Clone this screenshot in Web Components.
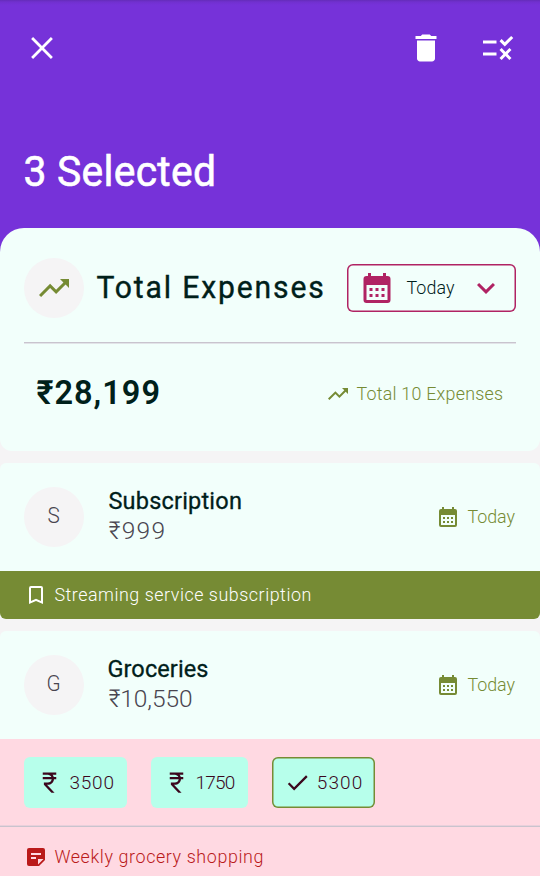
<!DOCTYPE html>
<html lang="en">
<head>
<meta charset="utf-8">
<title>Expenses</title>
<style>
html, body { margin: 0; height: 876px; overflow: hidden; }
body { font-family: Roboto, "Noto Sans", sans-serif; background: #f5f4f5; }
</style>
</head>
<body>
<expense-screen></expense-screen>
<script>
const ICONS = {
  close: '<path d="M5.4 5.4 18.6 18.6M18.6 5.4 5.4 18.6" fill="none" stroke="currentColor" stroke-width="1.85"/>',
  trash: '<path d="M6 19c0 1.1.9 2 2 2h8c1.1 0 2-.9 2-2V7H6v12zM19 4h-3.5l-1-1h-5l-1 1H5v2h14V4z"/>',
  rule: '<path d="M16.54 11L13 7.46l1.41-1.41 2.12 2.12 4.24-4.24 1.41 1.41L16.54 11zM11 7H2v2h9V7zm10 6.41L19.59 12 17 14.59 14.41 12 13 13.41 15.59 16 13 18.59 14.41 20 17 17.41 19.59 20 21 18.59 18.41 16 21 13.41zM11 15H2v2h9v-2z"/>',
  trend: '<path d="M16 6l2.29 2.29-4.88 4.88-4-4L2 16.59 3.41 18l6-6 4 4 6.3-6.29L22 12V6z"/>',
  calendar: '<path fill-rule="evenodd" d="M19 4h-1V2h-2v2H8V2H6v2H5a2 2 0 0 0-2 2v14a2 2 0 0 0 2 2h14a2 2 0 0 0 2-2V6a2 2 0 0 0-2-2zm0 16H5V10h14v10zM7 12h2v2H7zM11 12h2v2h-2zM15 12h2v2h-2zM7 16h2v2H7zM11 16h2v2h-2zM15 16h2v2h-2z"/>',
  chevron: '<path d="M7.41 8.59 12 13.17l4.59-4.58L18 10l-6 6-6-6z"/>',
  bookmark: '<path d="M17 3H7a2 2 0 0 0-2 2v16l7-3 7 3V5a2 2 0 0 0-2-2zm0 15-5-2.18L7 18V5h10v13z"/>',
  note: '<path fill-rule="evenodd" d="M19 3H5a2 2 0 0 0-2 2v14a2 2 0 0 0 2 2h10l6-6V5a2 2 0 0 0-2-2zM12 14H7v-2h5v2zm5-4H7V8h10v2zm-3 9.500V14h5.500L14 19.500z"/>',
  rupee: '<path d="M13.66 7c-.56-1.18-1.76-2-3.16-2H6V3h12v2h-3.26c.48.58.84 1.26 1.05 2H18v2h-2.02c-.25 2.8-2.61 5-5.48 5h-.73l6.73 7h-2.77L7 14v-2h3.5c1.76 0 3.22-1.3 3.46-3H6V7h7.66z"/>',
  check: '<path d="M9 16.17L4.83 12l-1.42 1.41L9 19 21 7l-1.41-1.41L9 16.17z"/>'
};

class AppIcon extends HTMLElement {
  connectedCallback() {
    const size = this.getAttribute('size') || 24;
    this.attachShadow({ mode: 'open' }).innerHTML = `
      <style>:host{display:block;flex:none;width:${size}px;height:${size}px}svg{display:block}</style>
      <svg width="${size}" height="${size}" viewBox="0 0 24 24" fill="currentColor">${ICONS[this.getAttribute('name')]}</svg>`;
  }
}
customElements.define('app-icon', AppIcon);

// A narrow, tracked label: the tracking is chosen so that the ink fills `width`.
class TrackedText extends HTMLElement {
  connectedCallback() {
    const text = this.getAttribute('text');
    const size = +this.getAttribute('size');
    const width = +this.getAttribute('width');
    const weight = this.getAttribute('weight') || 400;
    const squeeze = +(this.getAttribute('squeeze') || 0.94);
    const stroke = this.getAttribute('stroke') || 0;
    const ctx = document.createElement('canvas').getContext('2d');
    ctx.font = `${weight} ${size}px Roboto, "Noto Sans", sans-serif`;
    const m = ctx.measureText(text);
    const ink = m.actualBoundingBoxLeft + m.actualBoundingBoxRight;
    const tracking = text.length > 1 ? (width / squeeze - ink) / (text.length - 1) : 0;
    this.attachShadow({ mode: 'open' }).innerHTML = `
      <style>
        :host{display:block;flex:none;width:${width}px;height:${Math.round(size * 1.2)}px}
        span{display:inline-block;white-space:pre;font-size:${size}px;font-weight:${weight};
          line-height:${Math.round(size * 1.2)}px;letter-spacing:${tracking}px;
          -webkit-text-stroke:${stroke}px currentColor;
          transform-origin:0 50%;transform:translate(-.6px,-1px) scaleX(${squeeze});
          margin-left:${m.actualBoundingBoxLeft * squeeze}px}
      </style><span>${text}</span>`;
  }
}
customElements.define('tracked-text', TrackedText);

class RoundBadge extends HTMLElement {
  connectedCallback() {
    this.attachShadow({ mode: 'open' }).innerHTML = `
      <style>:host{display:flex;flex:none;width:60px;height:60px;border-radius:50%;background:#f5f4f5;align-items:center;justify-content:center}</style><slot></slot>`;
  }
}
customElements.define('round-badge', RoundBadge);

class SelectionBar extends HTMLElement {
  connectedCallback() {
    this.attachShadow({ mode: 'open' }).innerHTML = `
      <style>
        :host{display:block;height:252px;box-sizing:border-box;padding:30px 24px 0;color:#fff;
          background:linear-gradient(#642cb9,#7130cf 2px,#7632d9 5px)}
        .tools{display:flex;align-items:center;gap:36px;height:36px}
        .tools :first-child{margin-right:auto}
        tracked-text{margin:80px 0 0 2px}
      </style>
      <div class="tools"><app-icon name="close" size="36"></app-icon>
        <app-icon name="trash" size="36"></app-icon><app-icon name="rule" size="36"></app-icon></div>
      <tracked-text text="3 Selected" size="43" width="188.500" stroke=".6" squeeze=".95"></tracked-text>`;
  }
}
customElements.define('selection-bar', SelectionBar);

class PeriodPicker extends HTMLElement {
  connectedCallback() {
    this.attachShadow({ mode: 'open' }).innerHTML = `
      <style>
        :host{display:flex;flex:none;align-items:center;width:169.500px;height:48px;box-sizing:border-box;
          padding-left:12px;border-radius:6px;box-shadow:inset 0 0 0 1.5px #b02363;color:#b02363}
        tracked-text{color:#00201a;margin:0 13px 0 12.500px}
      </style>
      <app-icon name="calendar" size="36"></app-icon>
      <tracked-text text="Today" size="19" width="48" weight="300"></tracked-text>
      <app-icon name="chevron" size="36"></app-icon>`;
  }
}
customElements.define('period-picker', PeriodPicker);

class TotalCard extends HTMLElement {
  connectedCallback() {
    this.attachShadow({ mode: 'open' }).innerHTML = `
      <style>
        :host{display:block;position:relative;height:223px;margin-top:-24px;box-sizing:border-box;padding:30px 24px 0;
          border-radius:24px 24px 12px 12px;background:#f2fffb;color:#00201a}
        .head{display:flex;align-items:center;height:60px;padding-bottom:24px;
          border-bottom:1px solid #c9c4ce;box-shadow:0 1px #e2e4e8}
        .head tracked-text{margin-left:13px}
        period-picker{margin-left:auto}
        .sum{display:flex;align-items:center;height:102px;padding:0 13px}
        .count{display:flex;align-items:center;gap:7px;margin-left:auto;color:#768b34}
        app-icon[name=trend]{color:#768b34}
      </style>
      <div class="head"><round-badge><app-icon name="trend" size="36"></app-icon></round-badge>
        <tracked-text text="Total Expenses" size="32" width="226" stroke=".4"></tracked-text>
        <period-picker></period-picker></div>
      <div class="sum"><tracked-text text="₹28,199" size="33.500" width="122.500" weight="600" squeeze=".97"></tracked-text>
        <div class="count"><app-icon name="trend"></app-icon>
        <tracked-text text="Total 10 Expenses" size="19" width="146" weight="300"></tracked-text></div></div>`;
  }
}
customElements.define('total-card', TotalCard);

class ExpenseCard extends HTMLElement {
  connectedCallback() {
    const a = n => this.getAttribute(n);
    this.attachShadow({ mode: 'open' }).innerHTML = `
      <style>
        :host{display:block;margin-top:12px;border-radius:6px;overflow:hidden;background:#f2fffb}
        .row{display:flex;align-items:center;height:108px;box-sizing:border-box;padding:0 24px}
        round-badge{color:#49454f}
        .names{display:grid;gap:1px;margin:0 0 2px 25px}
        .name{color:#00201a}.amount{color:#49454f}
        .date{display:flex;align-items:center;gap:8px;margin-left:auto;color:#768b34}
        .date tracked-text{margin-right:.5px}
      </style>
      <div class="row">
        <round-badge><tracked-text text="${a('initial')}" size="22" width="12" weight="300"></tracked-text></round-badge>
        <div class="names">
          <tracked-text class="name" text="${a('name')}" size="24.500" width="${a('name-width')}" stroke=".3" squeeze=".96"></tracked-text>
          <tracked-text class="amount" text="${a('amount')}" size="24.500" width="${a('amount-width')}" weight="300" squeeze="1"></tracked-text>
        </div>
        <div class="date"><app-icon name="calendar"></app-icon><tracked-text text="Today" size="19" width="47.500" weight="300"></tracked-text></div>
      </div>
      <slot></slot>`;
  }
}
customElements.define('expense-card', ExpenseCard);

class NoteBar extends HTMLElement {
  connectedCallback() {
    this.attachShadow({ mode: 'open' }).innerHTML = `
      <style>:host{display:flex;align-items:center;gap:7px;height:48px;box-sizing:border-box;padding-left:24px;
        background:var(--bar);color:var(--ink)}
        :host([ruled]){height:61px}</style><slot></slot>`;
  }
}
customElements.define('note-bar', NoteBar);

class ChipRow extends HTMLElement {
  connectedCallback() {
    this.attachShadow({ mode: 'open' }).innerHTML = `
      <style>:host{display:flex;align-items:center;gap:24px;height:87px;padding:0 24px;background:#ffd9e2;
        border-bottom:1px solid #c9c4ce;box-shadow:inset 0 -1px #e9d0db}</style><slot></slot>`;
  }
}
customElements.define('chip-row', ChipRow);

class AmountChip extends HTMLElement {
  connectedCallback() {
    this.attachShadow({ mode: 'open' }).innerHTML = `
      <style>
        :host{display:flex;align-items:center;gap:7px;height:51px;box-sizing:border-box;padding:0 13px 0 12px;
          border-radius:6px;background:#b7ffeb;color:#3b071d}
        :host([selected]){box-shadow:inset 0 0 0 1.5px #768b34}
        tracked-text{margin-top:1px}
      </style>
      <app-icon name="${this.getAttribute('icon')}" size="27"></app-icon>
      <tracked-text text="${this.getAttribute('value')}" size="19" width="${this.getAttribute('ink')}" weight="300" squeeze="1"></tracked-text>`;
  }
}
customElements.define('amount-chip', AmountChip);

class ExpenseScreen extends HTMLElement {
  connectedCallback() {
    this.attachShadow({ mode: 'open' }).innerHTML = `
      <style>
        :host{display:block;width:540px;height:876px;overflow:hidden;background:#f5f4f5}
        .olive{--bar:#768b34;--ink:#fff}
        .rose{--bar:#ffd9e2;--ink:#ba1a1a}
        .rose app-icon{margin-bottom:1px}
      </style>
      <selection-bar></selection-bar>
      <total-card></total-card>
      <expense-card initial="S" name="Subscription" name-width="132" amount="₹999" amount-width="56">
        <note-bar class="olive"><app-icon name="bookmark"></app-icon>
          <tracked-text text="Streaming service subscription" size="19" width="256.500" weight="300"></tracked-text></note-bar>
      </expense-card>
      <expense-card initial="G" name="Groceries" name-width="99.500" amount="₹10,550" amount-width="83.500">
        <chip-row>
          <amount-chip icon="rupee" value="3500" ink="44"></amount-chip>
          <amount-chip icon="rupee" value="1750" ink="38.400"></amount-chip>
          <amount-chip icon="check" value="5300" ink="44" selected></amount-chip>
        </chip-row>
        <note-bar class="rose" ruled><app-icon name="note"></app-icon>
          <tracked-text text="Weekly grocery shopping" size="19" width="208.500" weight="300"></tracked-text></note-bar>
      </expense-card>`;
  }
}
customElements.define('expense-screen', ExpenseScreen);
</script>
</body>
</html>
